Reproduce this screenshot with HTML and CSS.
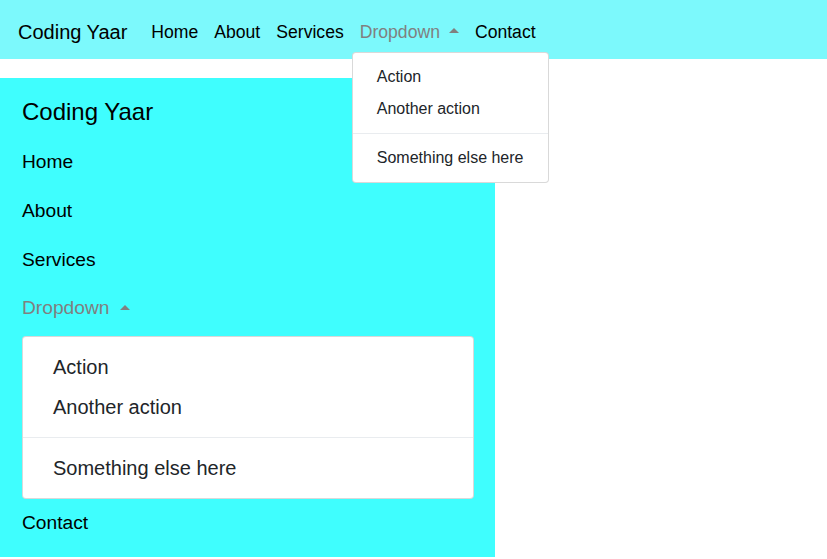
FILE: index.html
```html
<!DOCTYPE html>
<html lang="en">
<head>
    <meta charset="UTF-8">
    <meta name="viewport" content="width=device-width, initial-scale=1.0">
    <title>Coding Yaar</title>
    <link rel="stylesheet" href="styles.css">
</head>
<body>
    <nav class="topbar">
        <a class="brand" href="#">Coding Yaar</a>
        <ul class="nav">
            <li><a href="#">Home</a></li>
            <li><a href="#">About</a></li>
            <li><a href="#">Services</a></li>
            <li class="dropdown">
                <a class="toggle" href="#">Dropdown</a>
                <div class="menu">
                    <a href="#">Action</a>
                    <a href="#">Another action</a>
                    <div class="divider"></div>
                    <a href="#">Something else here</a>
                </div>
            </li>
            <li><a href="#">Contact</a></li>
        </ul>
    </nav>

    <nav class="sidebar">
        <a class="brand" href="#">Coding Yaar</a>
        <ul class="nav">
            <li><a href="#">Home</a></li>
            <li><a href="#">About</a></li>
            <li><a href="#">Services</a></li>
            <li class="dropdown">
                <a class="toggle" href="#">Dropdown</a>
                <div class="menu">
                    <a href="#">Action</a>
                    <a href="#">Another action</a>
                    <div class="divider"></div>
                    <a href="#">Something else here</a>
                </div>
            </li>
            <li><a href="#">Contact</a></li>
        </ul>
    </nav>
</body>
</html>
```

FILE: styles.css
```css
*{
    margin: 0;
    padding: 0;
    box-sizing: border-box;
}
body{
    font-family: "Liberation Sans", Arial, Helvetica, sans-serif;
    color: #000;
    background: #fff;
}
a{
    color: #000;
    text-decoration: none;
}
ul{
    list-style: none;
}

/* top navbar */
.topbar{
    display: flex;
    align-items: center;
    height: 59px;
    padding: 8px 16px 8px 18px;
    background-color: #7cf9fc;
}
.topbar .brand{
    font-size: 20px;
    line-height: 30px;
    padding: 7px 0 3px;
    margin-right: 16px;
}
.topbar .nav{
    display: flex;
}
.topbar .nav a{
    display: block;
    font-size: 17.6px;
    line-height: 26px;
    padding: 10px 8px 6px;
}
.dropdown{
    position: relative;
}
.nav a.toggle{
    color: #808080;
}
.toggle::after{
    content: "";
    display: inline-block;
    margin-left: 9px;
    vertical-align: 0.25em;
    border-left: 0.3em solid transparent;
    border-right: 0.3em solid transparent;
    border-bottom: 0.3em solid #808080;
}
.topbar .menu{
    position: absolute;
    top: 100%;
    left: 0;
    margin-top: 1px;
    z-index: 10;
    white-space: nowrap;
    padding: 8px 0;
}
.menu{
    background: #fff;
    border: 1px solid rgba(0,0,0,0.15);
    border-radius: 4px;
}
.topbar .nav .menu a{
    font-size: 16px;
    line-height: 24px;
    padding: 4px 24px;
    color: #212529;
}
.topbar .divider{
    margin: 8px 0;
}
.divider{
    height: 0;
    border-top: 1px solid #e9ecef;
}

/* collapsed side navbar */
.sidebar{
    width: 495px;
    margin-top: 19px;
    padding: 10px 21px 9px 22px;
    background-color: #3ffefe;
}
.sidebar .brand{
    display: block;
    font-size: 24px;
    line-height: 36px;
    padding: 6px 0 8px;
}
.sidebar .nav a{
    display: block;
    font-size: 19.2px;
    line-height: 28.8px;
    padding: 10px 0;
}
.sidebar .toggle::after{
    margin-left: 11px;
}
.sidebar .menu{
    margin-top: 3px;
    padding: 10px 0;
}
.sidebar .nav .menu a{
    font-size: 20px;
    line-height: 30px;
    padding: 5px 30px;
    color: #212529;
}
.sidebar .divider{
    margin: 10px 0;
}
```
